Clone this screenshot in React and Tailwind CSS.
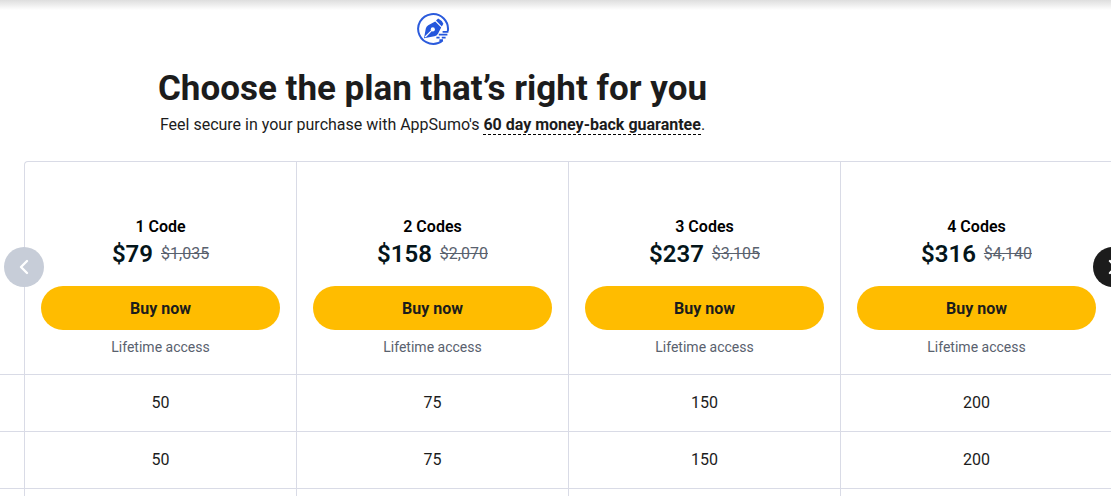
import React from 'react'
import { ChevronLeft, ChevronRight } from 'lucide-react'

const plans = [
  { name: '1 Code', price: '$79', oldPrice: '$1,035' },
  { name: '2 Codes', price: '$158', oldPrice: '$2,070' },
  { name: '3 Codes', price: '$237', oldPrice: '$3,105' },
  { name: '4 Codes', price: '$316', oldPrice: '$4,140' },
]

const limits = [
  ['50', '75', '150', '200'],
  ['50', '75', '150', '200'],
]

const Logo = () => (
  <svg className="h-8 w-8" viewBox="0 0 32 32" fill="none" aria-hidden="true">
    <path d="M30.8 18.2A14.9 14.9 0 1 0 25.6 27.4" stroke="#2b5bdc" strokeWidth="2" />
    <path d="M7 25.2 8.8 15.6Q9.2 13.4 11.2 12.2L18.2 8.4 24.2 14.6 21 20.8Q19.8 22.8 17.4 23.3Z" fill="#2456dc" />
    <path d="M19 7.4 21.2 5.4Q24.8 7 26.4 10.8L24.8 13.4Z" fill="#2456dc" />
    <path d="M8.2 24 15 17.2" stroke="#fff" strokeWidth="1.2" />
    <circle cx="15.8" cy="16.4" r="2.1" fill="#fff" />
    <path d="M25.6 18.8H31.4M21.8 21.6H30.4M24.8 24.6H28.6M19.4 24.6h3.2M22.4 27.2H26" stroke="#2456dc" strokeWidth="1.8" />
  </svg>
)

const PlanHeader = ({ plan }) => (
  <>
    <div className="text-base leading-[22px] font-semibold text-black">{plan.name}</div>
    <div className="flex items-center justify-center gap-2 h-8">
      <span className="text-2xl font-semibold text-[#04151a]">{plan.price}</span>
      <s className="text-base font-normal text-[#59616e]">{plan.oldPrice}</s>
    </div>
    <button className="mt-4 block h-11 w-full rounded-full bg-[#ffbc00] pt-px text-base font-bold text-[#1c1c1c] hover:bg-[#ffc933] transition cursor-pointer">
      Buy now
    </button>
    <div className="mt-2 text-sm leading-[18px] font-normal text-[#59616e]">Lifetime access</div>
  </>
)

const App = () => {
  return (
    <main className="relative overflow-hidden bg-white font-['Roboto',sans-serif] text-[#1c1c1c]">
      <div className="absolute inset-x-0 top-0 h-2.5 bg-linear-to-b from-[#dedede] to-white" />
      <header className="relative flex flex-col items-center pt-[13px] pr-[246px] text-center">
        <Logo />
        <h1 className="mt-5 text-[35px] leading-12 font-bold whitespace-nowrap">Choose the plan that’s right for you</h1>
        <p className="text-base leading-6 whitespace-nowrap">
          Feel secure in your purchase with AppSumo's{' '}
          <a href="#guarantee" className="border-b border-dashed border-black font-bold">60 day money-back guarantee</a>.
        </p>
      </header>

      <section className="relative mt-6">
        <table className="w-[calc(100%+1px)] table-fixed border-separate border-spacing-0 text-center">
          <colgroup>
            <col className="w-6" />
            <col />
            <col />
            <col />
            <col />
          </colgroup>
          <thead>
            <tr>
              <td className="border-b border-[#d9dbe6]" />
              {plans.map((plan, i) => (
                <th key={i} scope="col" className="border-t border-l border-b border-[#d9dbe6] px-4 pt-[54px] pb-[18px] first-of-type:rounded-tl">
                  <PlanHeader plan={plan} />
                </th>
              ))}
            </tr>
          </thead>
          <tbody>
            {limits.map((row, i) => (
              <tr key={i}>
                <td className="border-b border-[#d9dbe6]" />
                {row.map((value, j) => (
                  <td key={j} className="h-[57px] border-l border-b border-[#d9dbe6] text-base">{value}</td>
                ))}
              </tr>
            ))}
            <tr>
              <td className="h-2" />
              {plans.map((plan, i) => (
                <td key={i} className="border-l border-[#d9dbe6]" />
              ))}
            </tr>
          </tbody>
        </table>

        <button aria-label="Previous plans" className="absolute top-[86px] left-1 flex size-10 items-center justify-center rounded-full bg-[#c7cdd8] text-white">
          <ChevronLeft className="size-6" strokeWidth={2.4} />
        </button>
        <button aria-label="Next plans" className="absolute top-[86px] -right-[22px] flex size-10 items-center justify-center rounded-full bg-[#1c1c1c] text-white cursor-pointer">
          <ChevronRight className="size-6" strokeWidth={2.4} />
        </button>
      </section>
    </main>
  )
}

export default App
